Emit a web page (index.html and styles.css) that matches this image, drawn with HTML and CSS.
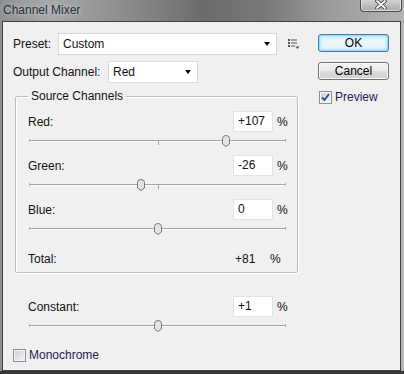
FILE: index.html
```html
<!DOCTYPE html>
<html lang="en">
<head>
    <meta charset="UTF-8">
    <title>Channel Mixer</title>
    <link rel="stylesheet" href="styles.css">
</head>
<body>
    <div class="window">
        <div class="titlebar">
            <span class="title">Channel Mixer</span>
            <span class="close">
                <svg width="12" height="9" viewBox="0 0 12 9"><path d="M2 1 L10 8 M10 1 L2 8" stroke="#3a3a3a" stroke-width="3.6" stroke-linecap="round"/><path d="M2 1 L10 8 M10 1 L2 8" stroke="#fff" stroke-width="1.8" stroke-linecap="round"/></svg>
            </span>
        </div>
        <div class="client">
            <div class="main">
                <div class="row">
                    <label class="lbl lbl-preset">Preset:</label>
                    <div class="select select-preset">Custom<span class="arrow"></span></div>
                    <svg class="menu-icon" width="12" height="10" viewBox="0 0 12 10">
                        <g fill="#505050">
                            <rect x="0" y="0" width="2" height="2"/><rect x="3" y="0.5" width="6" height="1"/>
                            <rect x="0" y="3" width="2" height="2"/><rect x="3" y="3.5" width="6" height="1"/>
                            <rect x="0" y="6" width="2" height="2"/><rect x="3" y="6.5" width="4" height="1"/>
                            <path d="M7.5 7.5 H11.5 L9.5 10 Z"/>
                        </g>
                    </svg>
                </div>
                <div class="row">
                    <label class="lbl lbl-output">Output Channel:</label>
                    <div class="select select-output">Red<span class="arrow"></span></div>
                </div>

                <fieldset class="group">
                    <legend>Source Channels</legend>
                    <div class="channel">
                        <div class="field"><span class="name">Red:</span><span class="num">+107</span><span class="pct">%</span></div>
                        <div class="slider"><div class="track"></div><span class="thumb" style="left:76.75%"><svg width="8" height="12" viewBox="0 0 8 12"><path d="M0.5 3.5 Q0.5 0.5 4 0.5 Q7.5 0.5 7.5 3.5 V9 L4 11.5 L0.5 9 Z" fill="#e4e4e4" stroke="#7a7a7a"/></svg></span></div>
                    </div>
                    <div class="channel">
                        <div class="field"><span class="name">Green:</span><span class="num">-26</span><span class="pct">%</span></div>
                        <div class="slider"><div class="track"></div><span class="thumb" style="left:43.5%"><svg width="8" height="12" viewBox="0 0 8 12"><path d="M0.5 3.5 Q0.5 0.5 4 0.5 Q7.5 0.5 7.5 3.5 V9 L4 11.5 L0.5 9 Z" fill="#e4e4e4" stroke="#7a7a7a"/></svg></span></div>
                    </div>
                    <div class="channel">
                        <div class="field"><span class="name">Blue:</span><span class="num">0</span><span class="pct">%</span></div>
                        <div class="slider"><div class="track"></div><span class="thumb" style="left:50%"><svg width="8" height="12" viewBox="0 0 8 12"><path d="M0.5 3.5 Q0.5 0.5 4 0.5 Q7.5 0.5 7.5 3.5 V9 L4 11.5 L0.5 9 Z" fill="#e4e4e4" stroke="#7a7a7a"/></svg></span></div>
                    </div>
                    <div class="total"><span class="name">Total:</span><span class="total-val">+81</span><span class="pct">%</span></div>
                </fieldset>

                <div class="channel constant">
                    <div class="field"><span class="name">Constant:</span><span class="num">+1</span><span class="pct">%</span></div>
                    <div class="slider"><div class="track"></div><span class="thumb" style="left:50.25%"><svg width="8" height="12" viewBox="0 0 8 12"><path d="M0.5 3.5 Q0.5 0.5 4 0.5 Q7.5 0.5 7.5 3.5 V9 L4 11.5 L0.5 9 Z" fill="#e4e4e4" stroke="#7a7a7a"/></svg></span></div>
                </div>

                <label class="check mono"><span class="box"></span>Monochrome</label>
            </div>

            <div class="side">
                <button class="btn btn-ok">OK</button>
                <button class="btn btn-cancel">Cancel</button>
                <label class="check preview"><span class="box"><svg width="11" height="11" viewBox="0 0 11 11"><path d="M2 5.5 L4.5 8 L9 2" fill="none" stroke="#27468f" stroke-width="1.8"/></svg></span>Preview</label>
            </div>
        </div>
    </div>
</body>
</html>
```

FILE: styles.css
```css
* { box-sizing: border-box; }
body { margin: 0; font-family: "Liberation Sans", Arial, sans-serif; font-size: 12px; color: #111; background: #6a6a6a; }

.window { width: 404px; height: 374px; display: flex; flex-direction: column; background: linear-gradient(to top, #353535 0 3px, transparent 3px), linear-gradient(90deg, #8e8e8e 0%, #a8a8a8 12%, #8e8e8e 30%, #6c6c6c 50%, #777 65%, #9c9c9c 82%, #b4b4b4 100%); }
.titlebar { height: 21px; flex: none; display: flex; justify-content: space-between; align-items: flex-start; padding-left: 3px; }
.title { line-height: 14px; padding-top: 3px; color: #25313d; text-shadow: 0 0 6px rgba(235, 235, 235, 0.9); }
.close { width: 42px; height: 13px; margin: -1px 2px 0 0; border: 1px solid #4b4b4b; border-top: none; border-radius: 0 0 4px 4px; background: linear-gradient(#d6d6d6, #aaa); box-shadow: inset 0 0 0 1px rgba(255, 255, 255, 0.55); display: flex; justify-content: center; }
.close svg { display: block; margin-top: 1px; }

.client { flex: 1; margin: 0 3px 3px 2px; border: 1px solid #404040; background: #f0f0f0; display: flex; padding: 11px 0 0 10px; }
.main { width: 295px; flex: none; }

.row { display: flex; align-items: center; height: 22px; margin-bottom: 6px; }
.lbl-preset { width: 45px; }
.lbl-output { width: 95px; }
.select { height: 22px; background: #fff; border: 1px solid #dadada; padding: 0 6px 0 4px; display: flex; align-items: center; justify-content: space-between; }
.select-preset { width: 219px; }
.select-output { width: 90px; }
.arrow { width: 0; height: 0; border-left: 3.5px solid transparent; border-right: 3.5px solid transparent; border-top: 4px solid #000; }
.menu-icon { margin-left: 11px; }

.group { margin: 2px 0 0 2px; width: 283px; min-width: 0; border: 1px solid #bdbdbd; border-radius: 2px; padding: 8px 10px 5px 12px; box-shadow: inset 1px 1px 0 #fff, 1px 1px 0 #fff; }
.group legend { padding: 0 3px; line-height: 14px; }

.field { display: flex; align-items: center; height: 21px; }
.name { flex: 1; }
.num { width: 40px; height: 21px; background: #fff; border: 1px solid #e3e3e3; padding-left: 4px; line-height: 19px; }
.pct { width: 10px; margin-left: 4px; }

.slider { position: relative; height: 23px; padding-top: 7px; margin: 0 1px; }
.slider::before { content: ""; position: absolute; left: 50%; top: 8px; width: 1px; height: 5px; background: #a3a3a3; }
.track { height: 3px; border-left: 1px solid #b0b0b0; border-right: 1px solid #b0b0b0; background: linear-gradient(#f0f0f0 0 1px, #a3a3a3 1px 2px, #fdfdfd 2px); }
.thumb { position: absolute; top: 3px; width: 8px; height: 12px; margin-left: -4px; }
.thumb svg { display: block; }

.total { display: flex; align-items: center; height: 16px; margin-top: 8px; }
.total-val { width: 37px; padding-left: 2px; }
.total .pct { width: 17px; margin-left: 0; }

.constant { margin: 23px 0 0 15px; width: 259px; }

.check { display: flex; align-items: center; color: #1e2150; }
.box { width: 13px; height: 13px; margin-right: 3px; border: 1px solid #8e8f8f; background: linear-gradient(135deg, #c9cdd3, #f7f7f7); box-shadow: inset 0 0 0 1px #f4f4f4; }
.box svg { display: block; }
.mono { margin-top: 8px; }

.side { margin: 1px 0 0 10px; width: 71px; }
.btn { display: block; width: 71px; height: 18px; padding: 0; margin: 0 0 10px; font: inherit; color: #000; border-radius: 3px; }
.btn-ok { border: 1px solid #3a80b8; background: #e8f5fb; box-shadow: inset 0 0 0 1px #9adaf6, inset 0 0 3px 2px #b5e4f8; }
.btn-cancel { border: 1px solid #707070; background: linear-gradient(#f2f2f2, #ebebeb 50%, #dddddd 50%, #cfcfcf); box-shadow: inset 0 0 0 1px #fbfbfb; }
.preview { margin: 3px 0 0 1px; }
```
